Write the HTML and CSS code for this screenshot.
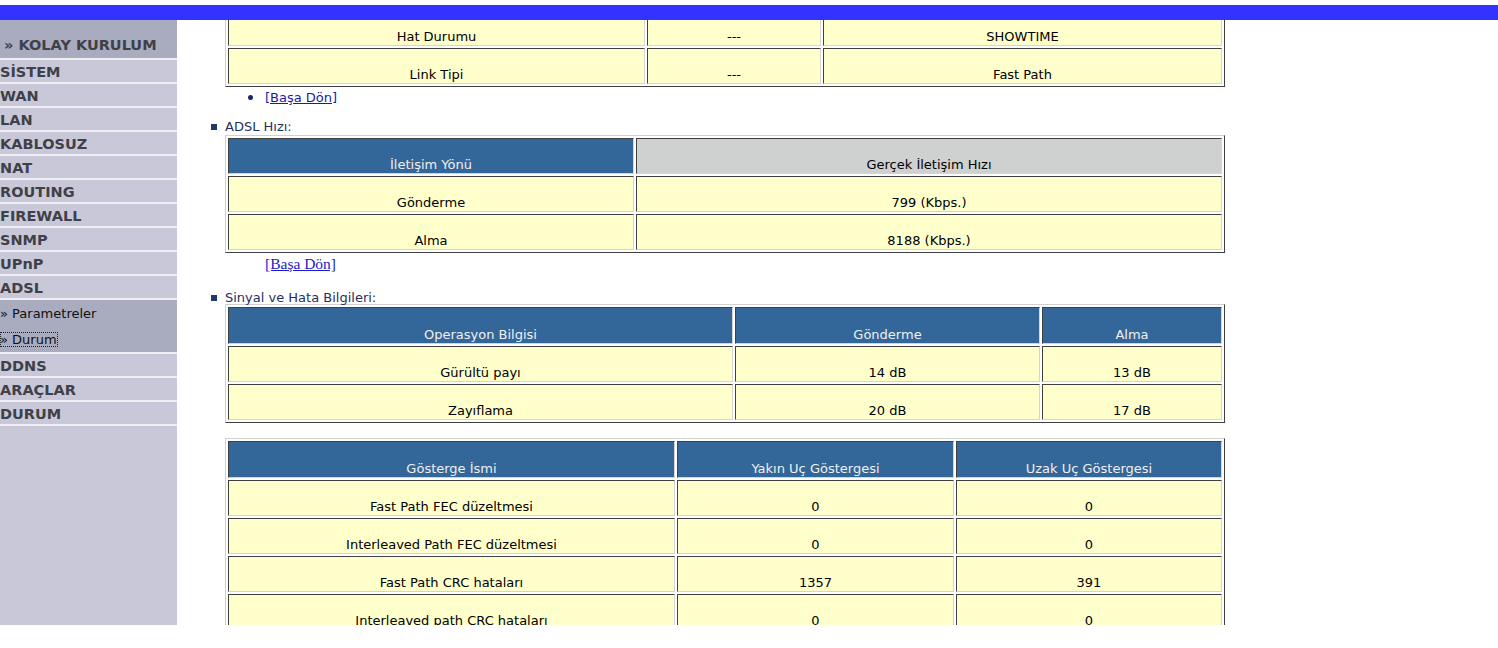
FILE: index.html
```html
<!DOCTYPE html>
<html lang="tr">
<head>
<meta charset="utf-8">
<title>ADSL Durum</title>
<link rel="stylesheet" href="styles.css">
</head>
<body>
<div class="topbar"></div>
<div class="frames">
  <nav class="sidebar">
    <div class="nav-head">» KOLAY KURULUM</div>
    <div class="nav-item">SİSTEM</div>
    <div class="nav-item">WAN</div>
    <div class="nav-item">LAN</div>
    <div class="nav-item">KABLOSUZ</div>
    <div class="nav-item">NAT</div>
    <div class="nav-item">ROUTING</div>
    <div class="nav-item">FIREWALL</div>
    <div class="nav-item">SNMP</div>
    <div class="nav-item">UPnP</div>
    <div class="nav-item">ADSL</div>
    <div class="nav-sub">
      <div class="sub-item">» Parametreler</div>
      <div class="sub-item"><span class="focus">» Durum</span></div>
    </div>
    <div class="nav-item">DDNS</div>
    <div class="nav-item">ARAÇLAR</div>
    <div class="nav-item">DURUM</div>
  </nav>
  <main class="main">
    <div class="scroll">
      <table class="grid t1">
        <tr><td class="c1">Hat Durumu</td><td class="c2">---</td><td class="c3">SHOWTIME</td></tr>
        <tr><td class="c1">Link Tipi</td><td class="c2">---</td><td class="c3">Fast Path</td></tr>
      </table>
      <ul class="back-list"><li><a href="#">[Başa Dön]</a></li></ul>

      <div class="section"><span class="sq"></span>ADSL Hızı:</div>
      <table class="grid t2">
        <tr><th class="c1">İletişim Yönü</th><th class="c2 gray">Gerçek İletişim Hızı</th></tr>
        <tr><td>Gönderme</td><td>799 (Kbps.)</td></tr>
        <tr><td>Alma</td><td>8188 (Kbps.)</td></tr>
      </table>
      <div class="back-serif"><a href="#">[Başa Dön]</a></div>

      <div class="section s2"><span class="sq"></span>Sinyal ve Hata Bilgileri:</div>
      <table class="grid t3">
        <tr class="hrow"><th class="c1">Operasyon Bilgisi</th><th class="c2">Gönderme</th><th class="c3">Alma</th></tr>
        <tr><td>Gürültü payı</td><td>14 dB</td><td>13 dB</td></tr>
        <tr><td>Zayıflama</td><td>20 dB</td><td>17 dB</td></tr>
      </table>

      <table class="grid t4">
        <tr class="hrow"><th class="c1">Gösterge İsmi</th><th class="c2">Yakın Uç Göstergesi</th><th class="c3">Uzak Uç Göstergesi</th></tr>
        <tr><td>Fast Path FEC düzeltmesi</td><td>0</td><td>0</td></tr>
        <tr><td>Interleaved Path FEC düzeltmesi</td><td>0</td><td>0</td></tr>
        <tr><td>Fast Path CRC hataları</td><td>1357</td><td>391</td></tr>
        <tr><td>Interleaved path CRC hataları</td><td>0</td><td>0</td></tr>
      </table>
    </div>
  </main>
</div>
</body>
</html>
```

FILE: styles.css
```css
html, body {
  margin: 0;
  padding: 0;
  background: #ffffff;
}
body {
  font-family: "DejaVu Sans", Verdana, sans-serif;
  font-size: 13px;
  color: #000;
}
.topbar {
  margin-top: 5px;
  height: 15px;
  background: #3333ff;
}
.frames {
  display: flex;
  height: 605px;
  overflow: hidden;
}
.sidebar {
  width: 177px;
  flex: 0 0 177px;
  background: #c8c8d8;
  font-weight: bold;
  font-size: 14.5px;
  color: #404048;
}
.nav-head {
  height: 40px;
  box-sizing: border-box;
  padding: 16px 0 0 4px;
  line-height: 18px;
  background: #a9abbf;
  border-bottom: 2px solid #eeeef4;
}
.nav-item {
  height: 24px;
  box-sizing: border-box;
  line-height: 24px;
  padding: 0;
  border-bottom: 2px solid #eeeef4;
}
.nav-sub {
  background: #a9abbf;
  font-weight: normal;
  font-size: 13px;
  color: #111;
  border-bottom: 2px solid #eeeef4;
}
.sub-item {
  height: 26px;
  line-height: 28px;
}
.focus {
  outline: 1px dotted #222;
  outline-offset: -1px;
  padding: 0 1px 0 0;
}
.main {
  flex: 1;
  overflow: hidden;
}
.scroll {
  padding-left: 48px;
  margin-top: -13px;
}
.grid {
  width: 1000px;
  table-layout: fixed;
  border-collapse: separate;
  border-spacing: 2px;
  border-style: solid;
  border-width: 1px;
  border-color: #d0d0d0 #404040 #404040 #d0d0d0;
}
.grid td, .grid th {
  box-sizing: border-box;
  height: 36px;
  padding: 1px 1px 0 1px;
  line-height: 16px;
  vertical-align: bottom;
  text-align: center;
  font-weight: normal;
  border-style: solid;
  border-width: 1px;
  border-color: #404040 #d4d4d4 #d4d4d4 #404040;
}
.grid td {
  background: #ffffcc;
  color: #000;
}
.grid th {
  background: #336699;
  color: #f0f0f0;
}
.grid th.gray {
  background: #cfd0d0;
  color: #000;
}
.grid .hrow th {
  height: 37px;
}
.t1 .c1 { width: 417px; }
.t1 .c2 { width: 174px; }
.t1 .c3 { width: 399px; }
.t2 .c1 { width: 406px; }
.t2 .c2 { width: 586px; }
.t3 .c1 { width: 505px; }
.t3 .c2 { width: 305px; }
.t3 .c3 { width: 180px; }
.t4 .c1 { width: 447px; }
.t4 .c2 { width: 277px; }
.t4 .c3 { width: 266px; }
.back-list {
  margin: 1px 0 0 0;
  padding: 0 0 0 40px;
  line-height: 16px;
  list-style: disc;
  color: #1a2a60;
}
.back-list li {
  height: 16px;
}
.back-list li::marker {
  font-size: 17px;
}
.back-list a {
  color: #1a1aa6;
}
.section {
  margin: 16px 0 1px -14px;
  height: 14px;
  line-height: 14px;
  color: #1f3060;
  display: flex;
  align-items: center;
}
.section.s2 {
  margin-top: 19px;
  margin-bottom: 0;
  height: 13px;
  line-height: 13px;
}
.sq {
  width: 6px;
  height: 6px;
  background: #1f3a6a;
  margin-right: 8px;
}
.back-serif {
  margin-top: 3px;
  padding-left: 40px;
  height: 16px;
  font-family: "Liberation Serif", "Times New Roman", serif;
  font-size: 15.5px;
  line-height: 16px;
}
.back-serif a {
  color: #1a1acc;
}
.t4 {
  margin-top: 15px;
}
```
